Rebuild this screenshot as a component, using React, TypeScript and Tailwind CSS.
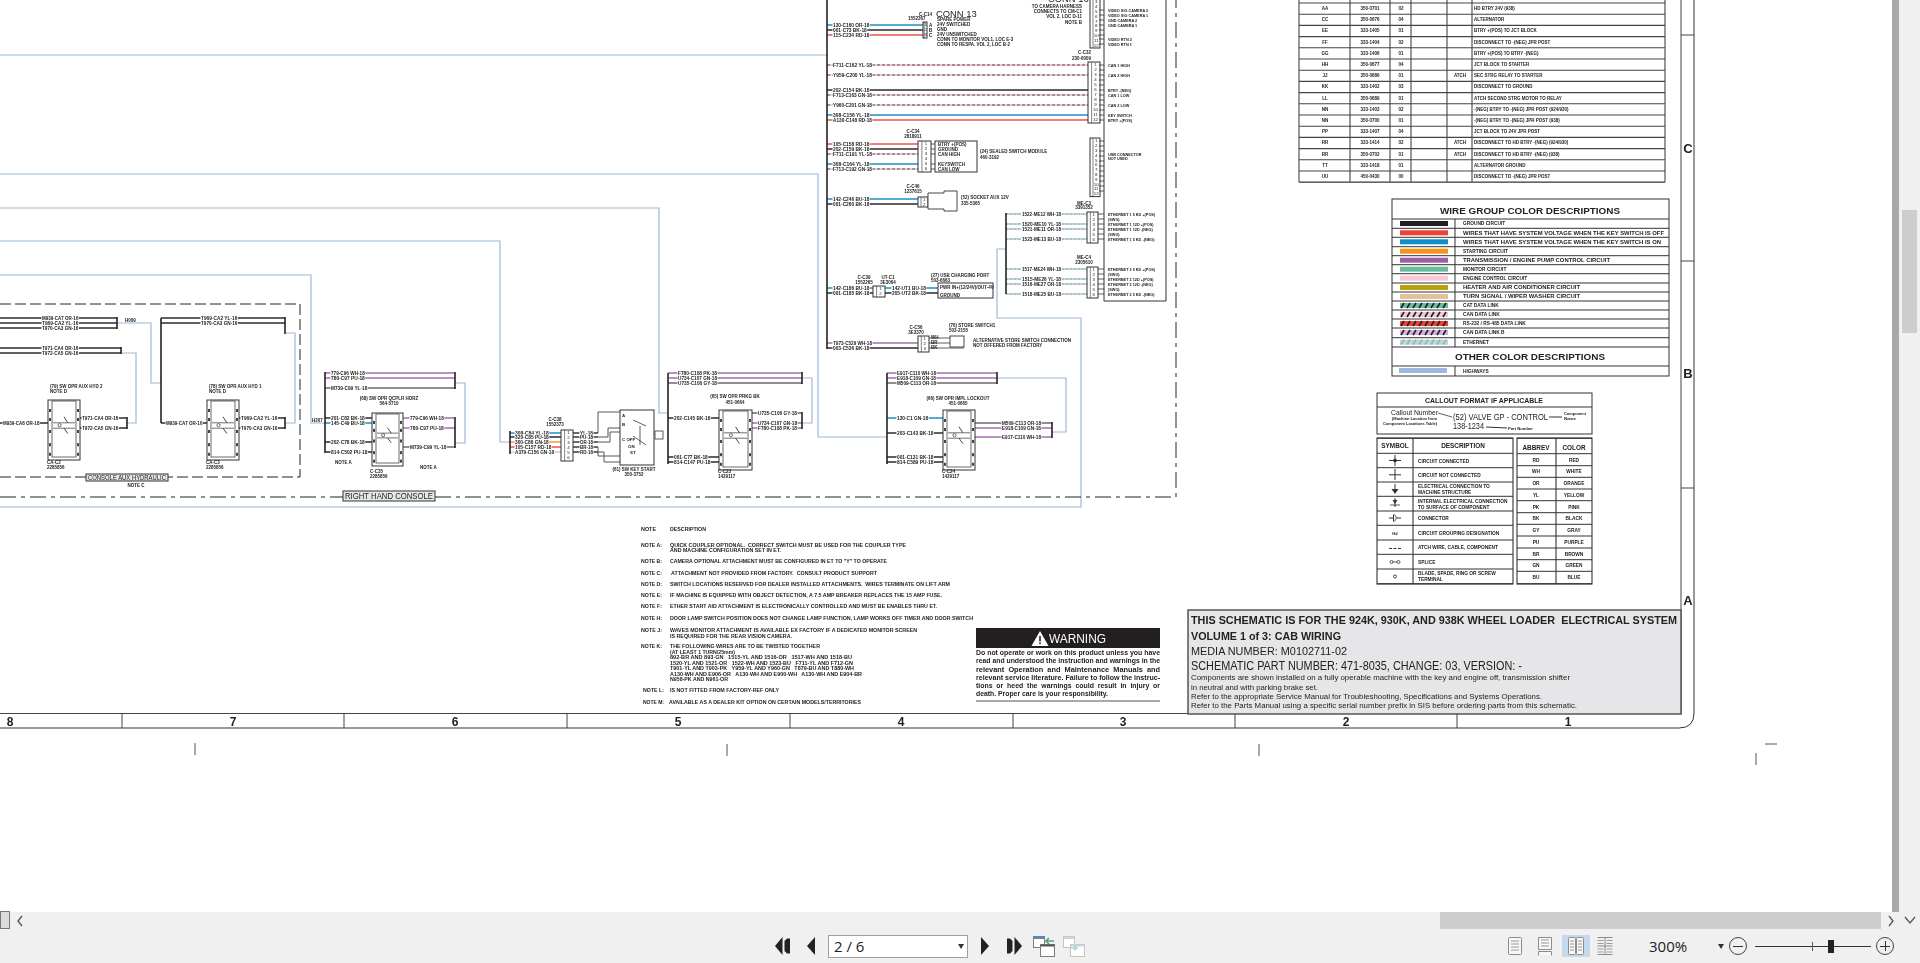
import type { ReactNode } from "react";

const BK = "#2b2b2b";
const BU = "#1b8fc8";
const RD = "#e8534a";
const PU = "#a56cb0";
const GY = "#6a6a6a";
const OR = "#f19a38";
const PN = "#f2b9c8";
const HW = "#9db8db";
const DASH = "dash";
const ETH = "eth";

type TextProps = {
  x: number;
  y: number;
  s?: number;
  w?: number;
  a?: "start" | "middle" | "end";
  b?: boolean;
  f?: string;
  children: ReactNode;
};

function T({ x, y, s = 4.5, w, a, b, f = "#222", children }: TextProps) {
  return (
    <text
      x={x}
      y={y}
      fontSize={s}
      textLength={w}
      lengthAdjust={w ? "spacingAndGlyphs" : undefined}
      textAnchor={a}
      fontWeight={b || s <= 5.2 ? 700 : 400}
      fill={f}
      xmlSpace="preserve"
    >
      {children}
    </text>
  );
}

function L({ x1, y1, x2, y2, c = "#333", w = 1 }: { x1: number; y1: number; x2: number; y2: number; c?: string; w?: number }) {
  return <line x1={x1} y1={y1} x2={x2} y2={y2} stroke={c} strokeWidth={w} />;
}

function Hw({ d }: { d: string }) {
  return <path d={d} fill="none" stroke={HW} strokeWidth={1.2} />;
}

// x1, x2, y, colour, label, label x
type WireRow = [number, number, number, string, string?, number?];

function Wire({ row }: { row: WireRow }) {
  const [x1, x2, y, c, label, lx] = row;
  const lw = label ? label.length * 2.6 : 0;
  return (
    <g>
      {c === DASH ? (
        <>
          <L x1={x1} y1={y} x2={x2} y2={y} c={PN} w={1.5} />
          <line x1={x1} y1={y} x2={x2} y2={y} stroke="#333" strokeWidth={0.8} strokeDasharray="3 2" />
        </>
      ) : c === ETH ? (
        <>
          <L x1={x1} y1={y} x2={x2} y2={y} c="#a9c6c8" w={1.4} />
          <line x1={x1} y1={y} x2={x2} y2={y} stroke="#8a9aa0" strokeWidth={0.6} strokeDasharray="2 2" />
        </>
      ) : (
        <L x1={x1} y1={y} x2={x2} y2={y} c={c} w={1.4} />
      )}
      {label && lx !== undefined && (
        <>
          <rect x={lx - 0.5} y={y - 2.5} width={lw + 1} height={5} fill="#fff" />
          <T x={lx} y={y + 1.7} w={lw}>{label}</T>
        </>
      )}
    </g>
  );
}

function Conn({ x, y, w, rows, step = 5, first = 1 }: { x: number; y: number; w: number; rows: number; step?: number; first?: number }) {
  return (
    <g>
      <rect x={x} y={y} width={w} height={rows * step + 1} fill="#fff" stroke="#333" strokeWidth={1} />
      <L x1={x + w * 0.3} y1={y} x2={x + w * 0.3} y2={y + rows * step + 1} w={0.6} />
      {Array.from({ length: rows }, (_, i) => (
        <text key={i} x={x + w * 0.62} y={y + i * step + 4.3} fontSize={4.4} textAnchor="middle" fill="#222">
          {i + first}
        </text>
      ))}
    </g>
  );
}

function Pins({ x, ys, d = 5 }: { x: number; ys: number[]; d?: number }) {
  return (
    <g>
      {ys.map((y) => (
        <L key={y} x1={x} y1={y} x2={x + d} y2={y} c="#333" w={0.8} />
      ))}
    </g>
  );
}

function Sw({ x, y, w, h }: { x: number; y: number; w: number; h: number }) {
  const dots = [0.15, 0.3, 0.5, 0.72, 0.88];
  return (
    <g>
      <rect x={x} y={y} width={w} height={h} fill="#fff" stroke="#333" strokeWidth={1} />
      <rect x={x + 4} y={y + 1} width={w - 8} height={h - 4} fill="none" stroke="#444" strokeWidth={0.8} />
      {dots.map((p) => (
        <g key={p}>
          <rect x={x + 1} y={y + h * p} width={2} height={3} fill="#444" />
          <rect x={x + w - 3} y={y + h * p} width={2} height={3} fill="#444" />
        </g>
      ))}
      <L x1={x + 5} y1={y + h * 0.38} x2={x + w - 5} y2={y + h * 0.38} w={0.7} />
      <L x1={x + w * 0.5} y1={y + h * 0.28} x2={x + w * 0.62} y2={y + h * 0.38} w={0.9} />
      <L x1={x + 5} y1={y + h * 0.47} x2={x + w - 5} y2={y + h * 0.47} w={0.7} />
      <L x1={x + w * 0.5} y1={y + h * 0.47} x2={x + w * 0.62} y2={y + h * 0.56} w={0.9} />
      <circle cx={x + w * 0.36} cy={y + h * 0.42} r={1.6} fill="none" stroke="#333" strokeWidth={0.7} />
    </g>
  );
}

function EndBar({ x, y1, y2 }: { x: number; y1: number; y2: number }) {
  return <L x1={x} y1={y1} x2={x} y2={y2} c="#222" w={1.6} />;
}

const WIRES: WireRow[] = [
  // console aux hydraulic
  [0, 117, 318, BK, "M939-CA7 OR-16", 42],
  [0, 117, 323, BK, "T969-CA2 YL-16", 42],
  [0, 117, 328, BK, "T970-CA3 GN-16", 42],
  [0, 121, 348, BK, "T971-CA4 OR-16", 42],
  [0, 121, 353, BK, "T972-CA5 GN-16", 42],
  [161, 285, 318, BK, "T969-CA2 YL-16", 201],
  [161, 285, 323, BK, "T970-CA3 GN-16", 201],
  [161, 207, 423, BK, "M939-CA7 OR-16", 166],
  [239, 285, 418, BK, "T969-CA2 YL-16", 241],
  [239, 285, 428, BK, "T970-CA3 GN-16", 241],
  [0, 48, 423, BK, "M939-CA8 OR-18", 3],
  [80, 127, 418, BK, "T971-CA4 OR-16", 82],
  [80, 127, 428, BK, "T972-CA5 GN-16", 82],
  // horizontal coupler switch
  [325, 455, 373, PU, "779-C96 WH-18", 331],
  [325, 455, 378, PU, "780-C97 PU-18", 331],
  [325, 455, 388, GY, "M739-C99 YL-18", 331],
  [325, 372, 418, BK, "201-C82 BK-18", 331],
  [325, 372, 423, BU, "145-C49 BU-18", 331],
  [325, 372, 442, BK, "202-C78 BK-18", 331],
  [325, 372, 452, BK, "814-C502 PU-18", 331],
  [403, 455, 418, PU, "779-C96 WH-18", 410],
  [403, 455, 428, PU, "780-C97 PU-18", 410],
  [403, 455, 447, GY, "M739-C99 YL-18", 410],
  // key start
  [510, 561, 433, BU, "308-C84 YL-18", 515],
  [510, 561, 437, BK, "320-C85 PU-18", 515],
  [510, 561, 442, OR, "300-C86 GN-18", 515],
  [510, 561, 447, RD, "105-C157 RD-18", 515],
  [510, 561, 452, PN, "A379-C156 GN-18", 515],
  [573, 598, 433, BK, "YL-18", 580],
  [573, 598, 437, BK, "PU-18", 580],
  [573, 598, 442, BK, "OR-18", 580],
  [573, 598, 447, BK, "BR-18", 580],
  [573, 598, 452, BK, "RD-18", 580],
  // park brake switch
  [668, 802, 373, PU, "F780-C108 PK-18", 678],
  [668, 802, 378, PU, "U734-C107 GN-18", 678],
  [668, 802, 383, GY, "U735-C106 GY-18", 678],
  [668, 719, 418, BK, "202-C145 BK-18", 674],
  [668, 719, 457, BK, "001-C77 BK-18", 674],
  [668, 719, 462, BK, "814-C147 PU-18", 674],
  [752, 802, 413, GY, "U735-C106 GY-18", 758],
  [752, 802, 423, PU, "U734-C107 GN-18", 758],
  [752, 802, 428, PU, "F780-C108 PK-18", 758],
  // implement lockout switch
  [887, 997, 373, PU, "E917-C110 WH-18", 897],
  [887, 997, 378, PU, "E918-C109 GN-18", 897],
  [887, 997, 383, GY, "M509-C113 OR-18", 897],
  [887, 943, 418, BU, "130-C1 GN-18", 897],
  [887, 943, 433, BK, "203-C143 BK-18", 897],
  [887, 943, 457, BK, "001-C131 BK-18", 897],
  [887, 943, 462, BK, "814-C589 PU-18", 897],
  [975, 1052, 423, GY, "M509-C113 OR-18", 1002],
  [975, 1052, 428, PU, "E918-C109 GN-18", 1002],
  [975, 1052, 437, PU, "E917-C110 WH-18", 1002],
  // main harness column
  [827, 923, 25, BU, "130-C160 OR-18", 833],
  [827, 923, 30, BK, "001-C73 BK-18", 833],
  [827, 923, 35, RD, "115-C234 RD-18", 833],
  [827, 1088, 65, DASH, "F711-C162 YL-18", 833],
  [827, 1088, 75, DASH, "Y959-C200 YL-18", 833],
  [827, 1088, 90, BK, "202-C154 BK-18", 833],
  [827, 1088, 95, DASH, "F713-C163 GN-18", 833],
  [827, 1088, 105, DASH, "Y960-C201 GN-18", 833],
  [827, 1088, 115, BU, "308-C156 YL-18", 833],
  [827, 1088, 120, RD, "A130-C148 RD-18", 833],
  [827, 918, 144, RD, "105-C158 RD-18", 833],
  [827, 918, 149, BK, "202-C159 BK-18", 833],
  [827, 918, 154, DASH, "F711-C191 YL-18", 833],
  [827, 918, 164, BU, "308-C164 YL-18", 833],
  [827, 918, 169, DASH, "F713-C192 GN-18", 833],
  [827, 918, 199, BU, "142-C246 BU-18", 833],
  [827, 918, 204, BK, "001-C260 BK-18", 833],
  [827, 873, 288, BU, "142-C186 BU-18", 833],
  [827, 873, 293, BK, "001-C185 BK-18", 833],
  [885, 938, 288, BU, "142-UT1 BU-18", 892],
  [885, 938, 293, BK, "205-UT2 BK-18", 892],
  [827, 918, 343, PU, "T973-C529 WH-18", 833],
  [827, 918, 348, BK, "003-C536 BK-18", 833],
  // ethernet
  [1006, 1087, 214, ETH, "1522-ME12 WH-18", 1022],
  [1006, 1087, 224, ETH, "1520-ME10 YL-18", 1022],
  [1006, 1087, 229, ETH, "1521-ME11 OR-18", 1022],
  [1006, 1087, 239, ETH, "1523-ME13 BU-18", 1022],
  [1006, 1087, 269, ETH, "1517-ME24 WH-18", 1022],
  [1006, 1087, 279, ETH, "1515-ME26 YL-18", 1022],
  [1006, 1087, 284, ETH, "1516-ME27 OR-18", 1022],
  [1006, 1087, 294, ETH, "1518-ME25 BU-18", 1022],
];

const BUSES: [number, number, number][] = [
  [161, 318, 423],
  [325, 372, 453],
  [510, 431, 454],
  [668, 373, 464],
  [887, 373, 464],
  [827, -2, 349],
  [1006, 213, 294],
];

const END_BARS: [number, number, number][] = [
  [117, 317, 329],
  [121, 347, 354],
  [285, 317, 334],
  [285, 417, 429],
  [127, 417, 429],
  [455, 372, 389],
  [455, 417, 448],
  [802, 372, 384],
  [802, 412, 429],
  [997, 372, 384],
  [1052, 422, 438],
];

const SIDE_LABELS: [string, number][] = [
  ["VIDEO SIG CAMERA 2", 10],
  ["VIDEO SIG CAMERA 1", 15],
  ["GND CAMERA 2", 20],
  ["GND CAMERA 1", 25],
  ["VIDEO RTN 2", 39],
  ["VIDEO RTN 1", 44],
  ["CAN 1 HIGH", 65],
  ["CAN 2 HIGH", 75],
  ["BTRY -(NEG)", 90],
  ["CAN 1 LOW", 95],
  ["CAN 2 LOW", 105],
  ["KEY SWITCH", 115],
  ["BTRY +(POS)", 120],
  ["USB CONNECTOR", 154],
  ["NOT USED", 158],
  ["ETHERNET 1 5 KD +(POS)", 214],
  ["(SWG)", 219],
  ["ETHERNET 1 12D +(POS)", 224],
  ["ETHERNET 1 12D -(NEG)", 229],
  ["(SWG)", 234],
  ["ETHERNET 1 5 KD -(NEG)", 239],
  ["ETHERNET 2 5 KD +(POS)", 269],
  ["(SWG)", 274],
  ["ETHERNET 2 12D +(POS)", 279],
  ["ETHERNET 2 12D -(NEG)", 284],
  ["(SWG)", 289],
  ["ETHERNET 2 5 KD -(NEG)", 294],
];

const CAPTIONS: [string, number, number, ("middle" | "start")?, number?][] = [
  ["(79) SW OPR AUX HYD 2", 50, 388],
  ["NOTE D", 50, 393],
  ["CA-C2", 47, 464],
  ["2285856", 47, 469],
  ["(78) SW OPR AUX HYD 1", 209, 388],
  ["NOTE D", 209, 393],
  ["CA-C3", 206, 464],
  ["2285856", 206, 469],
  ["H009", 125, 322],
  ["H207", 312, 422],
  ["NOTE C", 136, 487, "middle"],
  ["(68) SW OPR QCPLR HORZ", 389, 400, "middle"],
  ["564-5710", 389, 405, "middle"],
  ["NOTE A", 335, 464],
  ["NOTE A", 420, 469],
  ["C-C35", 370, 473],
  ["2285856", 370, 478],
  ["C-C38", 555, 421, "middle"],
  ["1552373", 555, 426, "middle"],
  ["(61) SW KEY START", 634, 471, "middle"],
  ["350-3752", 634, 476, "middle"],
  ["(65) SW OPR PRKG BK", 735, 398, "middle"],
  ["451-0664", 735, 404, "middle"],
  ["C-C23", 718, 473],
  ["1429117", 718, 478],
  ["(66) SW OPR IMPL LOCKOUT", 958, 400, "middle"],
  ["451-0665", 958, 405, "middle"],
  ["C-C24", 942, 473],
  ["1429117", 942, 478],
  ["C-C14", 919, 16],
  ["1552367", 908, 19.5],
  ["C-C32", 1078, 54],
  ["230-6009", 1072, 60],
  ["C-C34", 913, 133, "middle"],
  ["2818911", 913, 138, "middle"],
  ["(24) SEALED SWITCH MODULE", 980, 153],
  ["460-3192", 980, 159],
  ["C-C46", 913, 188, "middle"],
  ["1237615", 913, 193, "middle"],
  ["(52) SOCKET AUX 12V", 961, 199],
  ["335-5365", 961, 205],
  ["ME-C3", 1084, 205, "middle"],
  ["3391352", 1084, 209, "middle"],
  ["ME-C4", 1084, 259, "middle"],
  ["2305610", 1084, 264, "middle"],
  ["C-C39", 864, 279, "middle"],
  ["1552265", 864, 284, "middle"],
  ["UT-C1", 888, 279, "middle"],
  ["3E3064", 888, 284, "middle"],
  ["(27) USB CHARGING PORT", 931, 277],
  ["503-6663", 931, 281.5],
  ["PWR IN+(12/24V)/OUT-4V", 940, 289],
  ["GROUND", 940, 297],
  ["C-C56", 916, 329, "middle"],
  ["3E3370", 916, 334, "middle"],
  ["WH", 931, 339],
  ["BR", 931, 344],
  ["BK", 931, 349],
  ["(76) STORE SWITCH1", 949, 327],
  ["503-2155", 949, 332],
  ["ALTERNATIVE STORE SWITCH CONNECTION", 973, 342],
  ["NOT OFFERED FROM FACTORY", 973, 347],
  ["TO CAMERA HARNESS", 1082, 8],
  ["CONNECTS TO CM-C1", 1082, 13],
  ["VOL 2, LOC D-11", 1082, 18],
  ["NOTE B", 1082, 24],
  ["SPARE POWER", 937, 21],
  ["24V SWITCHED", 937, 26],
  ["GND", 937, 31],
  ["24V UNSWITCHED", 937, 36],
  ["CONN TO MONITOR VOL1, LOC E-3", 937, 41],
  ["CONN TO RESPA. VOL 2, LOC B-2", 937, 46],
  ["BTRY +(POS)", 938, 146],
  ["GROUND", 938, 151],
  ["CAN HIGH", 938, 156],
  ["KEYSWITCH", 938, 166],
  ["CAN LOW", 938, 171],
];

const PARTS: [string, string, string, string, string][] = [
  ["AA", "350-0701", "02", "", "HD BTRY 24V (938)"],
  ["CC", "350-0676", "04", "", "ALTERNATOR"],
  ["EE", "333-1405", "01", "", "BTRY +(POS) TO JCT BLOCK"],
  ["FF", "333-1404", "02", "", "DISCONNECT TO -(NEG) JPR POST"],
  ["GG", "333-1406", "01", "", "BTRY +(POS) TO BTRY -(NEG)"],
  ["HH", "350-0677", "04", "", "JCT BLOCK TO STARTER"],
  ["JJ", "350-0686", "01", "ATCH", "SEC STRG RELAY TO STARTER"],
  ["KK", "333-1402", "03", "", "DISCONNECT TO GROUND"],
  ["LL", "350-0689", "01", "", "ATCH SECOND STRG MOTOR TO RELAY"],
  ["NN", "333-1403", "02", "", "-(NEG) BTRY TO -(NEG) JPR POST (924/930)"],
  ["NN", "350-0700", "01", "", "-(NEG) BTRY TO -(NEG) JPR POST (938)"],
  ["PP", "333-1407", "04", "", "JCT BLOCK TO 24V JPR POST"],
  ["RR", "333-1414", "02", "ATCH", "DISCONNECT TO HD BTRY -(NEG) (924/930)"],
  ["RR", "350-0702", "01", "ATCH", "DISCONNECT TO HD BTRY -(NEG) (938)"],
  ["TT", "333-1418", "01", "", "ALTERNATOR GROUND"],
  ["UU", "450-0430", "00", "", "DISCONNECT TO -(NEG) JPR POST"],
];

const WIRE_LEGEND: [string, string, number?][] = [
  ["#231f20", "GROUND CIRCUIT"],
  ["#ef4136", "WIRES THAT HAVE SYSTEM VOLTAGE WHEN THE KEY SWITCH IS OFF", 201],
  ["#0e8fc9", "WIRES THAT HAVE SYSTEM VOLTAGE WHEN THE KEY SWITCH IS ON", 198],
  ["#f7941d", "STARTING CIRCUIT"],
  ["#9e5fa8", "TRANSMISSION / ENGINE PUMP CONTROL CIRCUIT", 147],
  ["#69bd9c", "MONITOR CIRCUIT"],
  ["#f7c7d5", "ENGINE CONTROL CIRCUIT"],
  ["#b9a20f", "HEATER AND AIR CONDITIONER CIRCUIT", 117],
  ["#e3bf9a", "TURN SIGNAL / WIPER WASHER CIRCUIT", 117],
  ["#69bd9c", "CAT DATA LINK"],
  ["#f7c7d5", "CAN DATA LINK"],
  ["#ef4136", "RS-232 / RS-485 DATA LINK"],
  ["#d3b3dd", "CAN DATA LINK B"],
  ["#bcd5d8", "ETHERNET"],
];

const LEGEND_LINES = [219, 228.3, 237.3, 246.7, 255.7, 264.7, 273.7, 283, 292, 301, 310, 319, 328, 337.7, 347];

const SYMBOL_LINES = [438.3, 453.3, 467.7, 482, 496.3, 511, 525.3, 540, 554.3, 569, 583.7];

const SYMBOL_ROWS: [string, string?][] = [
  ["CIRCUIT CONNECTED"],
  ["CIRCUIT NOT CONNECTED"],
  ["ELECTRICAL CONNECTION TO", "MACHINE STRUCTURE"],
  ["INTERNAL ELECTRICAL CONNECTION", "TO SURFACE OF COMPONENT"],
  ["CONNECTOR"],
  ["CIRCUIT GROUPING DESIGNATION"],
  ["ATCH WIRE, CABLE, COMPONENT"],
  ["SPLICE"],
  ["BLADE, SPADE, RING OR SCREW", "TERMINAL"],
];

const ABBREV_LINES = [438.3, 453.7, 465.7, 477.3, 489, 500.7, 512.7, 524.3, 536, 548, 559.7, 571.3, 583.7];

const ABBREV_ROWS = [
  ["RD", "RED"],
  ["WH", "WHITE"],
  ["OR", "ORANGE"],
  ["YL", "YELLOW"],
  ["PK", "PINK"],
  ["BK", "BLACK"],
  ["GY", "GRAY"],
  ["PU", "PURPLE"],
  ["BR", "BROWN"],
  ["GN", "GREEN"],
  ["BU", "BLUE"],
];

// x, baseline, width, text
const NOTES: [number, number, number, string][] = [
  [641, 530.7, 15, "NOTE"],
  [670, 530.7, 36, "DESCRIPTION"],
  [641, 546.7, 21, "NOTE A:"],
  [670, 546.7, 236, "QUICK COUPLER OPTIONAL.  CORRECT SWITCH MUST BE USED FOR THE COUPLER TYPE"],
  [670, 551.7, 111, "AND MACHINE CONFIGURATION SET IN ET."],
  [641, 563.3, 21, "NOTE B:"],
  [670, 563.3, 217, 'CAMERA OPTIONAL ATTACHMENT MUST BE CONFIGURED IN ET TO "Y" TO OPERATE'],
  [641, 575.3, 21, "NOTE C:"],
  [671, 575.3, 206, "ATTACHMENT NOT PROVIDED FROM FACTORY.  CONSULT PRODUCT SUPPORT"],
  [641, 586.3, 21, "NOTE D:"],
  [670, 586.3, 280, "SWITCH LOCATIONS RESERVED FOR DEALER INSTALLED ATTACHMENTS.  WIRES TERMINATE ON LIFT ARM"],
  [641, 597.3, 21, "NOTE E:"],
  [670, 597.3, 272, "IF MACHINE IS EQUIPPED WITH OBJECT DETECTION, A 7.5 AMP BREAKER REPLACES THE 15 AMP FUSE."],
  [641, 608.3, 21, "NOTE F:"],
  [670, 608.3, 267, "ETHER START AID ATTACHMENT IS ELECTRONICALLY CONTROLLED AND MUST BE ENABLES THRU ET."],
  [641, 620.3, 21, "NOTE H:"],
  [670, 620.3, 303, "DOOR LAMP SWITCH POSITION DOES NOT CHANGE LAMP FUNCTION, LAMP WORKS OFF TIMER AND DOOR SWITCH"],
  [641, 632.3, 21, "NOTE J:"],
  [670, 632.3, 247, "WAVES MONITOR ATTACHMENT IS AVAILABLE EX FACTORY IF A DEDICATED MONITOR SCREEN"],
  [670, 637.7, 122, "IS REQUIRED FOR THE REAR VISION CAMERA."],
  [641, 648.3, 21, "NOTE K:"],
  [670, 648.3, 150, "THE FOLLOWING WIRES ARE TO BE TWISTED TOGETHER"],
  [670, 654.3, 65, "(AT LEAST 1 TURN/25mm)"],
  [670, 659.3, 182, "892-BR AND 893-GN   1515-YL AND 1516-OR   1517-WH AND 1518-BU"],
  [670, 665.3, 183, "1520-YL AND 1521-OR   1522-WH AND 1523-BU   F711-YL AND F712-GN"],
  [670, 670.3, 184, "T901-YL AND T903-PK   Y959-YL AND Y960-GN   T879-BU AND T880-WH"],
  [670, 676.3, 192, "A130-WH AND E906-OR   A130-WH AND E900-WH   A130-WH AND E904-BR"],
  [670, 681.3, 58, "N958-PK AND N961-OR"],
  [643, 692.3, 21, "NOTE L:"],
  [670, 692.3, 109, "IS NOT FITTED FROM FACTORY-REF ONLY"],
  [643, 704.3, 21, "NOTE M:"],
  [669, 704.3, 192, "AVAILABLE AS A DEALER KIT OPTION ON CERTAIN MODELS/TERRITORIES"],
];

const WARNING_LINES: [string, number, number][] = [
  ["Do not operate or work on this product unless you have", 655, 184],
  ["read and understood the instruction and warnings in the", 663.3, 184],
  ["relevant  Operation  and  Maintenance  Manuals  and", 671.7, 184],
  ["relevant service literature. Failure to follow the instruc-", 680, 184],
  ["tions  or  heed  the  warnings  could  result  in  injury  or", 688.3, 184],
  ["death. Proper care is your responsibility.", 696.3, 132],
];

const TITLE_LINES: [string, number, number, number, boolean][] = [
  ["THIS SCHEMATIC IS FOR THE 924K, 930K, AND 938K WHEEL LOADER  ELECTRICAL SYSTEM", 624, 11, 486, true],
  ["VOLUME 1 of 3: CAB WIRING", 640, 11, 150, true],
  ["MEDIA NUMBER: M0102711-02", 655, 11, 156, false],
  ["SCHEMATIC PART NUMBER: 471-8035, CHANGE: 03, VERSION: -", 670, 12, 331, false],
  ["Components are shown installed on a fully operable machine with the key and engine off, transmission shifter", 680, 7.5, 379, false],
  ["in neutral and with parking brake set.", 689.5, 7.5, 127, false],
  ["Refer to the appropriate Service Manual for Troubleshooting, Specifications and Systems Operations.", 699, 7.5, 351, false],
  ["Refer to the Parts Manual using a specific serial number prefix in SIS before ordering parts from this schematic.", 708, 7.5, 386, false],
];

const ZONE_NUMBERS: [string, number][] = [
  ["8", 10],
  ["7", 233],
  ["6", 455],
  ["5", 678],
  ["4", 901],
  ["3", 1123],
  ["2", 1346],
  ["1", 1568],
];

function PartsTable() {
  const columns = [1299, 1350, 1390, 1411, 1447, 1472, 1665];
  const top = 3;
  const step = 11.2;
  return (
    <g>
      {PARTS.map((p, i) => {
        const y = top + i * step + 7;
        return (
          <g key={p[1]}>
            <T x={1325} y={y} a="middle">{p[0]}</T>
            <T x={1370} y={y} a="middle">{p[1]}</T>
            <T x={1401} y={y} a="middle">{p[2]}</T>
            {p[3] && <T x={1460} y={y} a="middle">{p[3]}</T>}
            <T x={1474} y={y}>{p[4]}</T>
          </g>
        );
      })}
      {Array.from({ length: 17 }, (_, i) => (
        <L key={i} x1={1299} y1={top + i * step} x2={1665} y2={top + i * step} c="#444" w={1.1} />
      ))}
      {columns.map((x) => (
        <L key={x} x1={x} y1={-2} x2={x} y2={top + 16 * step} c="#444" w={1.1} />
      ))}
      <L x1={1299} y1={top + 16 * step} x2={1665} y2={top + 16 * step} c="#666" w={1.6} />
    </g>
  );
}

function WireLegend() {
  return (
    <g>
      <rect x={1392} y={199} width={277} height={177} fill="#fff" stroke="#333" strokeWidth={1} />
      <T x={1440} y={214} s={9} w={180} b>WIRE GROUP COLOR DESCRIPTIONS</T>
      {LEGEND_LINES.map((y) => (
        <L key={y} x1={1392} y1={y} x2={1669} y2={y} />
      ))}
      <L x1={1455} y1={219} x2={1455} y2={347} />
      {WIRE_LEGEND.map(([c, label, w], i) => {
        const y = LEGEND_LINES[i];
        const striped = i >= 9;
        return (
          <g key={label}>
            <rect x={1400} y={y + 2} width={48} height={5} fill={c} />
            {striped &&
              Array.from({ length: 8 }, (_, k) => (
                <line
                  key={k}
                  x1={1401 + k * 6}
                  y1={y + 7}
                  x2={1404 + k * 6}
                  y2={y + 2}
                  stroke={i === 13 ? "#92b5b5" : "#222"}
                  strokeWidth={1.6}
                />
              ))}
            <T x={1463} y={y + 6.3} s={4.8} w={w}>{label}</T>
          </g>
        );
      })}
      <T x={1455} y={360} s={9} w={150} b>OTHER COLOR DESCRIPTIONS</T>
      <L x1={1392} y1={366} x2={1669} y2={366} />
      <L x1={1455} y1={366} x2={1455} y2={376} />
      <rect x={1399} y={368} width={48} height={5} fill={HW} />
      <T x={1463} y={373} s={4.8}>HIGHWAYS</T>
    </g>
  );
}

function CalloutBox() {
  return (
    <g>
      <rect x={1377} y={393} width={215} height={41} fill="#fff" stroke="#333" strokeWidth={1} />
      <L x1={1377} y1={407} x2={1592} y2={407} />
      <T x={1484} y={403} s={7} w={118} a="middle" b>CALLOUT FORMAT IF APPLICABLE</T>
      <T x={1391} y={415} s={7} w={47}>Callout Number</T>
      <T x={1392} y={420} s={3.4} w={45} b>(Machine Location from</T>
      <T x={1383} y={425} s={3.4} w={54} b>Component Locations Table)</T>
      <T x={1453} y={420} s={9.5} w={95}>(52) VALVE GP - CONTROL</T>
      <T x={1453} y={429} s={9.5} w={31}>138-1234</T>
      <T x={1564} y={415} s={3.4} w={22} b>Component</T>
      <T x={1564} y={420} s={3.4} w={12} b>Name</T>
      <T x={1508} y={430} s={3.4} w={25} b>Part Number</T>
      <L x1={1438} y1={413} x2={1452} y2={417} w={0.8} />
      <L x1={1549} y1={417} x2={1562} y2={417} w={1} />
      <L x1={1486} y1={427} x2={1507} y2={428} w={1} />
    </g>
  );
}

function SymbolTable() {
  const cx = 1395;
  return (
    <g>
      <rect x={1377} y={438} width={136} height={146} fill="#fff" stroke="#333" strokeWidth={1.1} />
      {SYMBOL_LINES.map((y) => (
        <L key={y} x1={1377} y1={y} x2={1513} y2={y} w={1} />
      ))}
      <L x1={1413} y1={438} x2={1413} y2={584} w={1.1} />
      <T x={1395} y={448} s={6.4} a="middle" b>SYMBOL</T>
      <T x={1463} y={448} s={6.4} a="middle" b>DESCRIPTION</T>
      {SYMBOL_ROWS.map(([a, b], i) => {
        const mid = (SYMBOL_LINES[i + 1] + SYMBOL_LINES[i + 2]) / 2;
        return b ? (
          <g key={a}>
            <T x={1418} y={mid - 1} s={4.8}>{a}</T>
            <T x={1418} y={mid + 5} s={4.8}>{b}</T>
          </g>
        ) : (
          <T key={a} x={1418} y={mid + 2} s={4.8}>{a}</T>
        );
      })}
      <L x1={cx - 6} y1={460.5} x2={cx + 6} y2={460.5} />
      <L x1={cx} y1={455} x2={cx} y2={466} />
      <circle cx={cx} cy={460.5} r={1.8} fill="#222" />
      <L x1={cx - 6} y1={474.8} x2={cx + 6} y2={474.8} />
      <L x1={cx} y1={469} x2={cx} y2={480} />
      <L x1={cx} y1={484} x2={cx} y2={491} />
      <path d={`M${cx - 3.5} 489 H${cx + 3.5} L${cx} 494 Z`} fill="#333" />
      <L x1={cx} y1={498} x2={cx} y2={507} />
      <L x1={cx - 5} y1={505} x2={cx + 5} y2={505} w={0.8} />
      <path d={`M${cx - 2.5} 500 H${cx + 2.5} L${cx} 504 Z`} fill="#333" />
      <L x1={cx - 6} y1={518} x2={cx - 1.5} y2={518} />
      <L x1={cx + 1.5} y1={518} x2={cx + 6} y2={518} />
      <L x1={cx - 1.5} y1={514.5} x2={cx - 1.5} y2={521.5} />
      <path d={`M${cx - 0.5} 514.5 L${cx + 1.5} 518 L${cx - 0.5} 521.5`} fill="none" stroke="#333" strokeWidth={0.8} />
      <T x={cx} y={534.5} s={4.4} a="middle" b>H#</T>
      <line x1={cx - 6} y1={548.5} x2={cx + 6} y2={548.5} stroke="#333" strokeWidth={1} strokeDasharray="3 1.5" />
      <circle cx={cx - 3.5} cy={562} r={1.5} fill="none" stroke="#333" strokeWidth={0.8} />
      <circle cx={cx + 3.5} cy={562} r={1.5} fill="none" stroke="#333" strokeWidth={0.8} />
      <L x1={cx - 2} y1={562} x2={cx + 2} y2={562} w={0.8} />
      <circle cx={cx} cy={576.5} r={1.5} fill="none" stroke="#333" strokeWidth={0.9} />
    </g>
  );
}

function AbbrevTable() {
  return (
    <g>
      <rect x={1517} y={438} width={75} height={146} fill="#fff" stroke="#333" strokeWidth={1.1} />
      {ABBREV_LINES.map((y) => (
        <L key={y} x1={1517} y1={y} x2={1592} y2={y} w={1} />
      ))}
      <L x1={1556} y1={438} x2={1556} y2={584} w={1.1} />
      <T x={1536} y={450} s={6.4} a="middle" b>ABBREV</T>
      <T x={1574} y={450} s={6.4} a="middle" b>COLOR</T>
      {ABBREV_ROWS.map(([a, c], i) => {
        const y = (ABBREV_LINES[i + 1] + ABBREV_LINES[i + 2]) / 2 + 1.8;
        return (
          <g key={a}>
            <T x={1536} y={y} s={4.8} a="middle">{a}</T>
            <T x={1574} y={y} s={4.8} a="middle">{c}</T>
          </g>
        );
      })}
    </g>
  );
}

function Schematic() {
  return (
    <svg width={1892} height={912} viewBox="0 0 1892 912" className="block blur-[0.3px] font-['Liberation_Sans',Arial,sans-serif]">
      {/* highways */}
      <Hw d="M0 55H828" />
      <Hw d="M0 174H818V437H887" />
      <Hw d="M0 208H659V413H668" />
      <Hw d="M0 241H500V442H510" />
      <Hw d="M0 275H311V423H325" />
      <Hw d="M0 507H1081V318H997V249H1006" />
      <Hw d="M117 323H151V383H161" />
      <Hw d="M121 353H136V423H127" />
      <Hw d="M285 333H295V423H285" />
      <Hw d="M455 383H465V443H455" />
      <Hw d="M802 378H812V423H802" />
      <Hw d="M997 378H1066V432H1052" />

      {/* console outlines */}
      <path d="M0 304H300V477H168M86 477H0" fill="none" stroke="#222" strokeWidth={1} strokeDasharray="11 4" />
      <path d="M0 497H343M435 497H1176V-2" fill="none" stroke="#222" strokeWidth={1} strokeDasharray="16 5 4 5" />
      <rect x={86} y={474} width={82} height={7} fill="#e6e6e6" stroke="#333" strokeWidth={1} />
      <T x={127} y={480} s={6.4} w={78} a="middle">CONSOLE AUX HYDRAULIC</T>
      <rect x={343} y={491} width={92} height={10} fill="#e6e6e6" stroke="#333" strokeWidth={1} />
      <T x={389} y={499} s={8.4} w={88} a="middle">RIGHT HAND CONSOLE</T>

      {/* module outline */}
      <path d="M1104 -2V301H1166V-2" fill="none" stroke="#333" strokeWidth={1} />

      {WIRES.map((row, i) => (
        <Wire key={i} row={row} />
      ))}
      {BUSES.map(([x, y1, y2]) => (
        <L key={x} x1={x} y1={y1} x2={x} y2={y2} c="#222" w={1.6} />
      ))}
      {END_BARS.map(([x, y1, y2], i) => (
        <EndBar key={i} x={x} y1={y1} y2={y2} />
      ))}

      {/* switches */}
      <Sw x={48} y={400} w={32} h={60} />
      <Sw x={207} y={400} w={32} h={60} />
      <Sw x={372} y={413} w={31} h={53} />
      <Sw x={719} y={410} w={33} h={60} />
      <Sw x={943} y={410} w={32} h={60} />

      {/* key start */}
      <Conn x={561} y={430} w={12} rows={6} />
      <rect x={620} y={410} width={34} height={55} fill="#fff" stroke="#333" strokeWidth={1} />
      <path d="M598 433V412H620M598 437H608V428H620M598 442H610V432H620M598 447V456H620M598 452H604V462H620" fill="none" stroke="#444" strokeWidth={0.9} />
      <path d="M633 420L646 426M633 436L646 445M640 426V445" fill="none" stroke="#333" strokeWidth={0.8} />
      <T x={622} y={417} s={4.4}>A</T>
      <T x={622} y={426} s={4.4}>B</T>
      <T x={622} y={441} s={4.4}>C OFF</T>
      <T x={628} y={448} s={4.4}>ON</T>
      <T x={630} y={454} s={4.4}>ST</T>
      <rect x={655} y={431} width={8} height={8} fill="#fff" stroke="#333" strokeWidth={0.8} />

      {/* connectors */}
      <Conn x={923} y={22} w={4} rows={3} step={5} />
      <Conn x={1088} y={62} w={12} rows={12} />
      <Conn x={1090} y={-1} w={10} rows={10} step={4.8} first={3} />
      <Conn x={1090} y={138} w={10} rows={12} step={4.8} />
      <Conn x={918} y={141} w={13} rows={6} />
      <Conn x={918} y={197} w={10} rows={2} step={4.5} />
      <Conn x={1087} y={212} w={11} rows={6} />
      <Conn x={1087} y={267} w={11} rows={6} />
      <Conn x={873} y={286} w={12} rows={2} />
      <Conn x={918} y={336} w={11} rows={3} />
      <Pins x={1099} ys={[10, 15, 20, 25, 30, 35, 39, 44]} />
      <Pins x={1099} ys={[65, 70, 75, 80, 85, 90, 95, 100, 105, 110, 115, 120]} />
      <Pins x={1099} ys={[141, 146, 151, 156, 161, 166, 171, 176, 181, 186, 191]} />
      <Pins x={1098} ys={[214, 219, 224, 229, 234, 239, 269, 274, 279, 284, 289, 294]} d={6} />
      <rect x={935} y={141} width={42} height={31} fill="none" stroke="#333" strokeWidth={1} />
      <Pins x={931} ys={[144, 149, 154, 164, 169]} d={4} />
      <path d="M928 193H944V191H957V211H944V209H928Z" fill="#fff" stroke="#333" strokeWidth={0.9} />
      <rect x={938} y={283} width={55} height={15} fill="#fff" stroke="#333" strokeWidth={1} />
      <rect x={950} y={336} width={14} height={11} fill="#fff" stroke="#333" strokeWidth={0.9} />
      <path d="M929 338H950M929 343H950M929 348H964" fill="none" stroke="#333" strokeWidth={0.8} />

      {CAPTIONS.map(([text, x, y, a], i) => {
        const rightAligned = x === 1082;
        return (
          <T key={i} x={x} y={y} a={rightAligned ? "end" : a}>{text}</T>
        );
      })}
      {SIDE_LABELS.map(([text, y], i) => (
        <T key={i} x={1108} y={y + 1.6} s={3.8} b>{text}</T>
      ))}
      <T x={936} y={17} s={9.4}>CONN 13</T>
      <T x={1048} y={2} s={9.4}>CONN 16</T>
      <T x={929} y={26.5} s={4.6}>A</T>
      <T x={929} y={31.5} s={4.6}>B</T>
      <T x={929} y={36.5} s={4.6}>C</T>

      <PartsTable />
      <WireLegend />
      <CalloutBox />
      <SymbolTable />
      <AbbrevTable />

      {/* notes */}
      {NOTES.map(([x, y, w, text], i) => (
        <T key={i} x={x} y={y} w={w}>{text}</T>
      ))}

      {/* warning */}
      <rect x={976} y={628} width={184} height={20} fill="#231f20" />
      <path d="M1040 631L1048.5 646H1031.5Z" fill="#fff" />
      <rect x={1039.2} y={636} width={1.6} height={5.5} fill="#231f20" />
      <rect x={1039.2} y={642.5} width={1.6} height={1.6} fill="#231f20" />
      <T x={1049} y={643} s={12.5} w={57} f="#fff">WARNING</T>
      {WARNING_LINES.map(([text, y, w]) => (
        <T key={y} x={976} y={y} s={7} w={w} b>{text}</T>
      ))}
      <L x1={976} y1={701} x2={1160} y2={701} c="#555" w={1.2} />

      {/* drawing frame */}
      <path d="M1694 -2V713Q1694 728 1679 728H0" fill="none" stroke="#333" strokeWidth={1} />
      <L x1={1681} y1={-2} x2={1681} y2={714} c="#444" w={1} />
      <L x1={0} y1={713.5} x2={1681} y2={713.5} c="#444" w={1} />
      {[122, 344, 567, 790, 1013, 1235, 1457].map((x) => (
        <L key={x} x1={x} y1={713} x2={x} y2={728} c="#444" w={1} />
      ))}
      {[35, 261, 488].map((y) => (
        <L key={y} x1={1681} y1={y} x2={1694} y2={y} c="#444" w={1} />
      ))}
      {ZONE_NUMBERS.map(([n, x]) => (
        <T key={n} x={x} y={726} s={12} a="middle" b>{n}</T>
      ))}
      <T x={1688} y={153} s={13} a="middle" b>C</T>
      <T x={1688} y={378} s={13} a="middle" b>B</T>
      <T x={1688} y={605} s={13} a="middle" b>A</T>

      {/* title block */}
      <rect x={1188} y={610} width={493} height={104} fill="#e6e6e8" stroke="#4a4a4a" strokeWidth={1.4} />
      {TITLE_LINES.map(([text, y, s, w, b]) => (
        <T key={y} x={1191} y={y} s={s} w={w} b={b}>{text}</T>
      ))}

      {/* crop marks */}
      <L x1={195} y1={743} x2={195} y2={755} c="#555" />
      <L x1={727} y1={744} x2={727} y2={756} c="#555" />
      <L x1={1259} y1={744} x2={1259} y2={756} c="#555" />
      <L x1={1756} y1={753} x2={1756} y2={765} c="#555" />
      <L x1={1765} y1={744} x2={1777} y2={744} c="#555" />
    </svg>
  );
}

function FirstPageIcon({ flip }: { flip?: boolean }) {
  return (
    <svg width={16} height={18} viewBox="0 0 16 18" className={flip ? "-scale-x-100" : ""}>
      <path d="M0 9L7.5 0V18Z" fill="#222" />
      <path d="M9.5 4L12 1.5H15V16.5H12L9.5 14Z" fill="#222" />
    </svg>
  );
}

function StepIcon({ flip }: { flip?: boolean }) {
  return (
    <svg width={10} height={18} viewBox="0 0 10 18" className={flip ? "-scale-x-100" : ""}>
      <path d="M1 9L9 0V18Z" fill="#222" />
    </svg>
  );
}

function DocLines({ x, y, w, rows, c = "#9a9a9a" }: { x: number; y: number; w: number; rows: number; c?: string }) {
  return (
    <>
      {Array.from({ length: rows }, (_, i) => (
        <line key={i} x1={x} y1={y + i * 3} x2={x + w} y2={y + i * 3} stroke={c} strokeWidth={1} />
      ))}
    </>
  );
}

function ViewIcon({ kind }: { kind: number }) {
  const edge = "#8c8c8c";
  return (
    <svg width={16} height={20} viewBox="0 0 16 20">
      {kind === 0 && (
        <>
          <rect x={1.5} y={1.5} width={13} height={17} rx={1} fill="#f7f7f7" stroke={edge} />
          <DocLines x={4} y={5} w={8} rows={4} />
        </>
      )}
      {kind === 1 && (
        <>
          <path d="M1.5 1.5H14.5V13.5H1.5Z" fill="#f7f7f7" stroke={edge} />
          <DocLines x={4} y={4} w={8} rows={3} />
          <path d="M1.5 19.5V15.5H14.5V19.5" fill="#f7f7f7" stroke={edge} />
        </>
      )}
      {kind === 2 && (
        <>
          <rect x={0.5} y={1.5} width={7} height={17} rx={1} fill="#f7f7f7" stroke={edge} />
          <rect x={8.5} y={1.5} width={7} height={17} rx={1} fill="#f7f7f7" stroke={edge} />
          <DocLines x={2} y={5} w={4} rows={4} />
          <DocLines x={10} y={5} w={4} rows={4} />
        </>
      )}
      {kind === 3 && (
        <>
          <path d="M0.5 1.5H15.5M8 1.5V18.5M0.5 18.5H15.5M0.5 10H15.5" fill="none" stroke={edge} />
          <DocLines x={0.5} y={4.5} w={6} rows={2} />
          <DocLines x={9.5} y={4.5} w={6} rows={2} />
          <DocLines x={0.5} y={13} w={6} rows={2} />
          <DocLines x={9.5} y={13} w={6} rows={2} />
        </>
      )}
    </svg>
  );
}

function ExtractIcon({ pale }: { pale?: boolean }) {
  const line = pale ? "#c4c4c4" : "#7d7d7d";
  const bar = pale ? "#c7d4e4" : "#5f86b8";
  const arrow = pale ? "#b8d6c8" : "#5d9c80";
  return (
    <svg width={22} height={21} viewBox="0 0 22 21">
      <rect x={0.5} y={0.5} width={11} height={11} fill="#fff" stroke={line} />
      <rect x={0.5} y={0.5} width={11} height={2.5} fill={bar} />
      <rect x={7.5} y={8.5} width={14} height={12} fill="#fff" stroke={line} />
      <rect x={7.5} y={8.5} width={14} height={2} fill={pale ? "#c7d4e4" : "#555"} />
      <path d={pale ? "M8 12H14M11 10L14 12L11 14" : "M21 5H13M16 2L13 5L16 8"} fill="none" stroke={arrow} strokeWidth={1.6} />
    </svg>
  );
}

function Chevron({ dir, className = "" }: { dir: "l" | "r" | "d"; className?: string }) {
  const d = dir === "l" ? "M6 1L2 6L6 11" : dir === "r" ? "M2 1L6 6L2 11" : "M1 2L6 8L11 2";
  return (
    <svg width={dir === "d" ? 12 : 8} height={12} viewBox={dir === "d" ? "0 0 12 12" : "0 0 8 12"} className={className}>
      <path d={d} fill="none" stroke="#555" strokeWidth={1.3} />
    </svg>
  );
}

export default function App() {
  return (
    <div className="h-[963px] w-[1920px] overflow-hidden bg-[#f0f0f0] font-['Open_Sans',sans-serif] text-[#222]">
      <div className="flex h-[929px]">
        <div className="flex w-[1899px] flex-col">
          <div className="flex h-[912px]">
            <div className="w-[1892px] overflow-hidden bg-white">
              <Schematic />
            </div>
            <div className="w-[7px] bg-[#a8a8a8]" />
          </div>
          <div className="flex h-[17px] items-center">
            <div className="h-[18px] w-[10px] -translate-y-px border border-[#777] bg-[#dcdcdc]" />
            <Chevron dir="l" className="ml-[6px]" />
            <div className="ml-[1416px] h-full w-[441px] bg-[#cdcdcd]" />
            <Chevron dir="r" className="ml-[6px]" />
          </div>
        </div>
        <div className="relative flex w-[21px] flex-col items-center">
          <div className="mt-[210px] h-[123px] w-[15px] bg-[#cdcdcd]" />
          <Chevron dir="d" className="absolute bottom-[2px]" />
        </div>
      </div>
      <div className="flex h-[34px] items-center pl-[775px]">
        <FirstPageIcon />
        <div className="ml-[15px]">
          <StepIcon />
        </div>
        <div className="ml-[12px] flex h-[23px] w-[140px] items-center justify-between border border-[#a0a0a0] bg-white pl-[5px] pr-[3px] text-[15px]">
          <span>2 / 6</span>
          <span className="h-0 w-0 border-x-[3.5px] border-t-[5px] border-x-transparent border-t-[#333]" />
        </div>
        <div className="ml-[12px]">
          <StepIcon flip />
        </div>
        <div className="ml-[16px]">
          <FirstPageIcon flip />
        </div>
        <div className="ml-[11px]">
          <ExtractIcon />
        </div>
        <div className="ml-[8px]">
          <ExtractIcon pale />
        </div>
        <div className="ml-[422px]">
          <ViewIcon kind={0} />
        </div>
        <div className="ml-[14px]">
          <ViewIcon kind={1} />
        </div>
        <div className="ml-[9px] flex h-[22px] w-[28px] items-center justify-center bg-[#c4d8ee]">
          <ViewIcon kind={2} />
        </div>
        <div className="ml-[7px]">
          <ViewIcon kind={3} />
        </div>
        <span className="ml-[36px] w-[39px] text-[15px] whitespace-nowrap">300%</span>
        <span className="ml-[30px] h-0 w-0 border-x-[3.5px] border-t-[5px] border-x-transparent border-t-[#333]" />
        <div className="ml-[5px] flex h-[18px] w-[18px] items-center justify-center rounded-full border border-[#444]">
          <div className="h-px w-[10px] bg-[#333]" />
        </div>
        <div className="relative ml-[8px] h-px w-[116px] bg-[#333]">
          <div className="absolute left-[57px] top-[-4px] h-[9px] w-px bg-[#555]" />
          <div className="absolute left-[73px] top-[-6px] h-[13px] w-[6px] bg-[#222]" />
        </div>
        <div className="relative ml-[5px] flex h-[18px] w-[18px] items-center justify-center rounded-full border border-[#444]">
          <div className="h-px w-[10px] bg-[#333]" />
          <div className="absolute h-[10px] w-px bg-[#333]" />
        </div>
      </div>
    </div>
  );
}
